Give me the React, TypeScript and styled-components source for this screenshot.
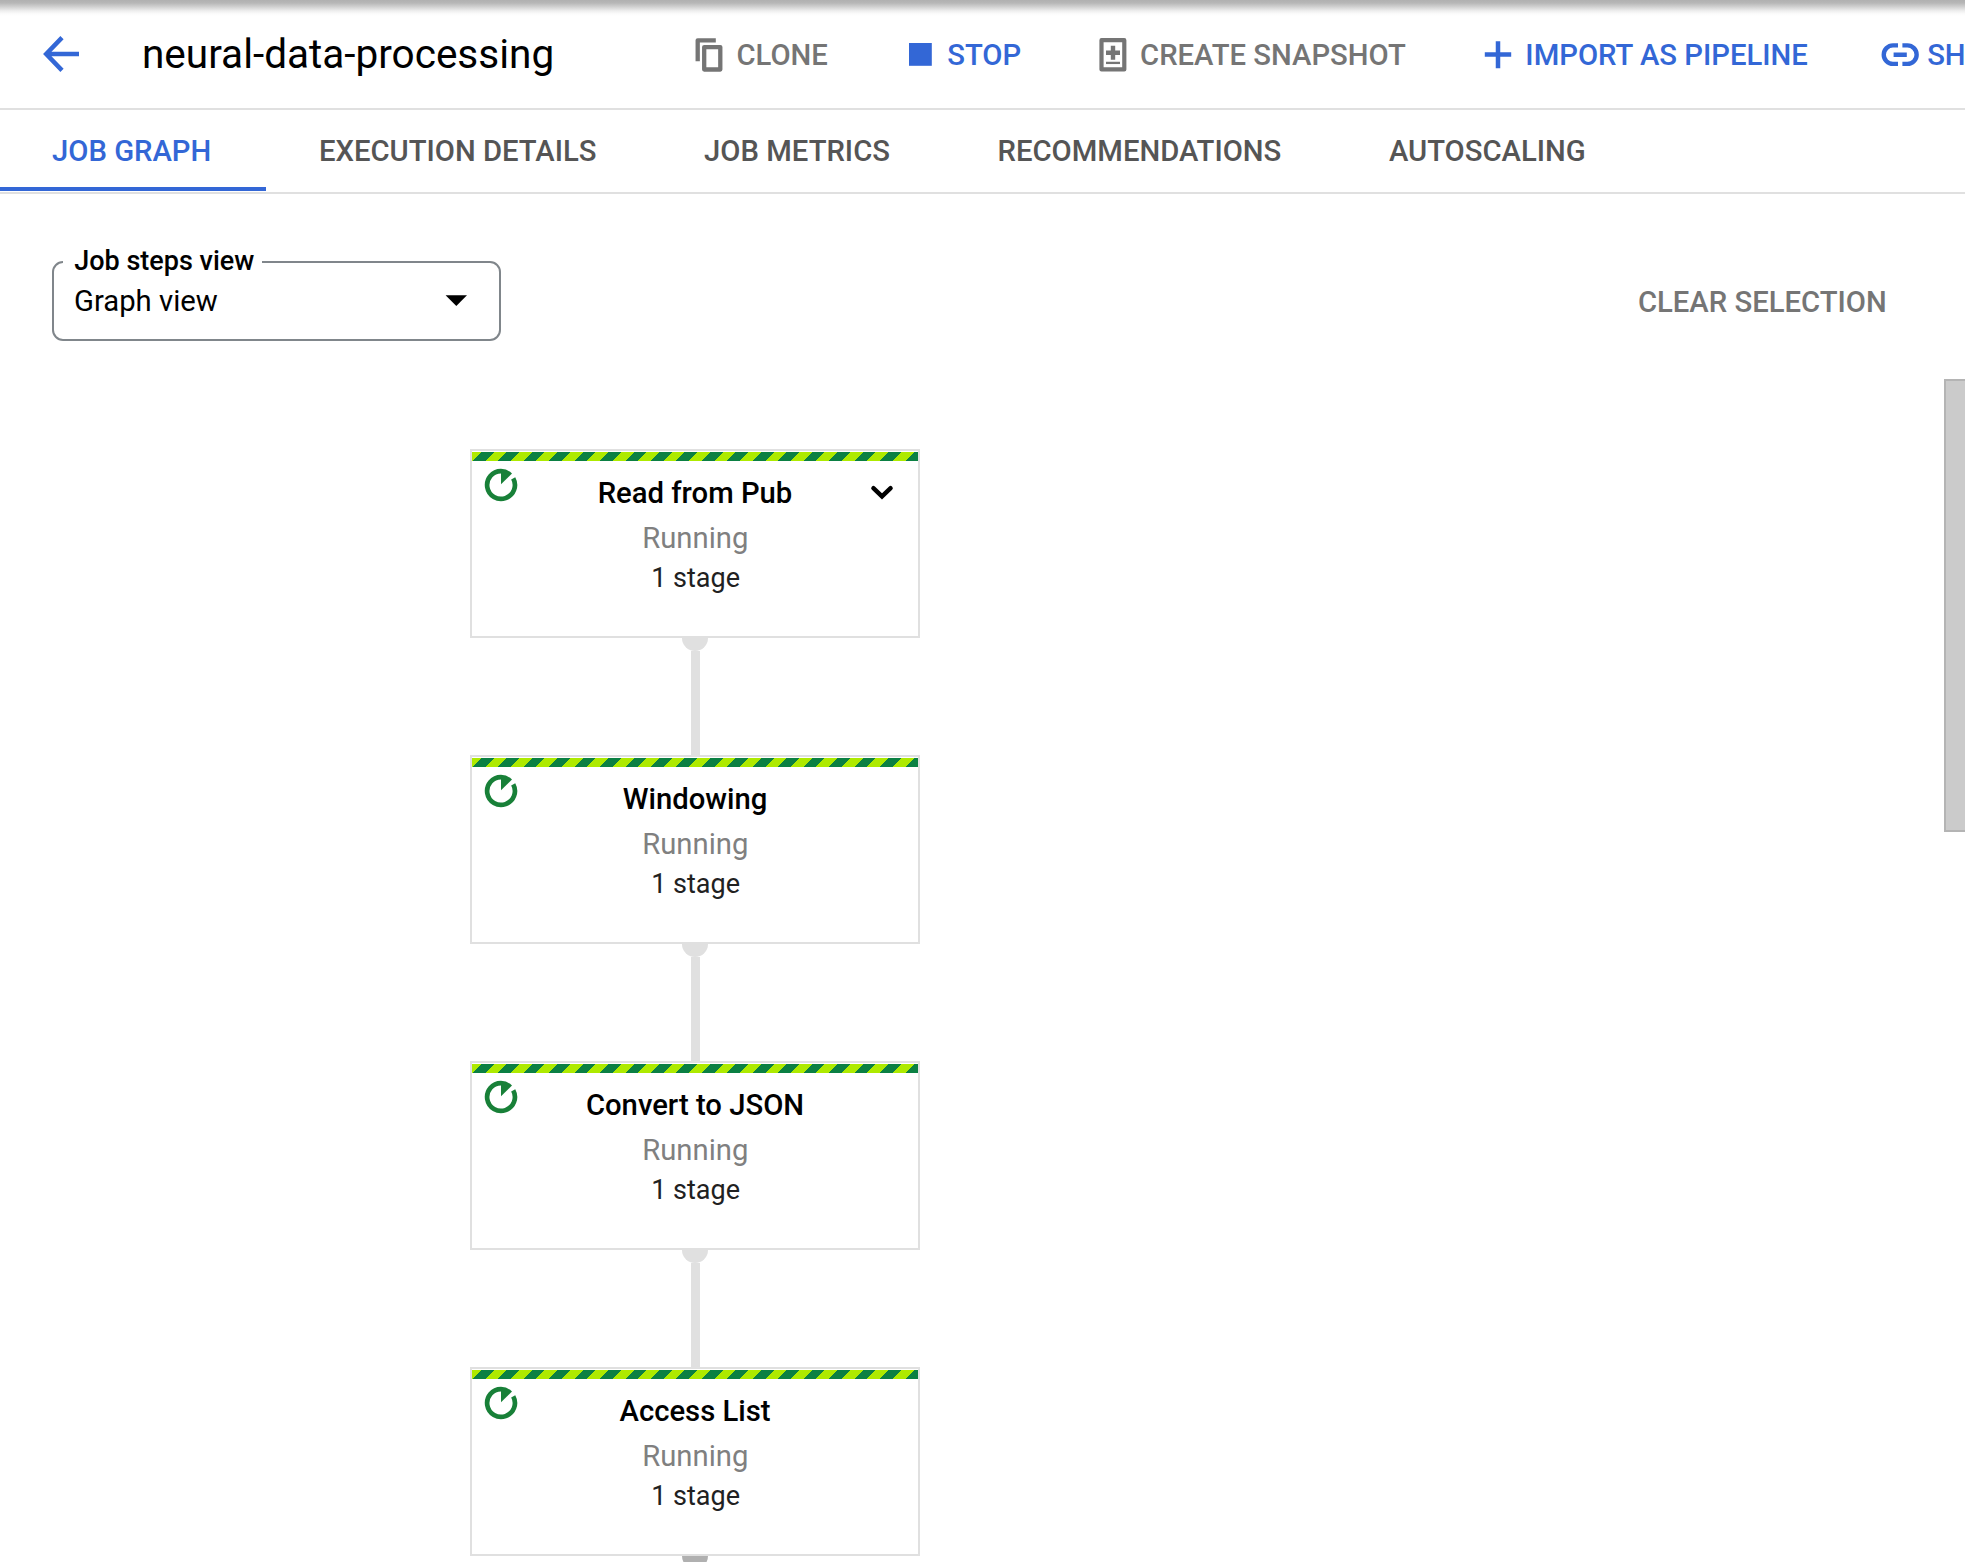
import React from "react";
import styled, { createGlobalStyle } from "styled-components";

const BLUE = "#3367d6";
const GREY = "#757575";
const LINE = "#e0e0e0";

const GlobalStyle = createGlobalStyle`
  * { box-sizing: border-box; }
  body {
    margin: 0;
    background: #fff;
    font-family: "Roboto", "Liberation Sans", sans-serif;
    color: #000;
  }
  svg { display: block; flex: none; overflow: visible; }
`;

const Page = styled.div`
  position: relative;
  display: flex;
  flex-direction: column;
  width: 1965px;
  height: 1562px;
  overflow: hidden;
  background: #fff;
`;

const TopShadow = styled.div`
  position: absolute;
  inset: 0 0 auto 0;
  height: 16px;
  background: linear-gradient(#b0b0b0 0, #b7b7b7 3px, #d2d2d2 7px, #efefef 11px, #fcfcfc 14px, #fff 16px);
`;

const Header = styled.header`
  display: flex;
  align-items: center;
  flex: none;
  height: 110px;
  padding: 2px 0 0 43px;
  border-bottom: 2px solid ${LINE};
  white-space: nowrap;
`;

const BackButton = styled.button`
  margin: 0 0 2px;
  padding: 0;
  border: 0;
  background: none;
`;

const Title = styled.h1`
  margin: 0 0 2px 63px;
  font-size: 40.5px;
  font-weight: 400;
  line-height: 54px;
`;

const ActionButton = styled.button<{ $lead: number; $active?: boolean }>`
  display: flex;
  align-items: center;
  flex: none;
  gap: 9px;
  margin: 0 0 0 ${(p) => p.$lead}px;
  padding: 0;
  border: 0;
  background: none;
  font: 500 29.25px/40px "Roboto", sans-serif;
  color: ${(p) => (p.$active ? BLUE : GREY)};
`;

const Tabs = styled.nav`
  display: flex;
  flex: none;
  height: 84px;
  border-bottom: 2px solid ${LINE};
`;

const Tab = styled.div<{ $selected?: boolean }>`
  display: flex;
  align-items: center;
  padding: 5px 54.5px 0 52px;
  margin-right: 1.1px;
  margin-bottom: 1px;
  border-bottom: 4px solid ${(p) => (p.$selected ? BLUE : "transparent")};
  font-size: 29.25px;
  font-weight: 500;
  line-height: 40px;
  white-space: nowrap;
  color: ${(p) => (p.$selected ? BLUE : "#555")};
`;

const Controls = styled.div`
  display: flex;
  align-items: center;
  justify-content: space-between;
  flex: none;
  height: 80px;
  margin: 67px 78.3px 0 52px;
`;

const Select = styled.div`
  position: relative;
  display: flex;
  align-items: center;
  justify-content: space-between;
  width: 449px;
  height: 80px;
  padding: 0 32px 0 20px;
  border: 2px solid #80868b;
  border-radius: 11px;
  font-size: 29.25px;
`;

const SelectLabel = styled.span`
  position: absolute;
  top: -17px;
  left: 9px;
  width: 199px;
  padding-left: 11.2px;
  background: #fff;
  font-size: 27px;
  font-weight: 500;
  line-height: 30px;
  white-space: nowrap;
`;

const ClearButton = styled.button`
  padding: 2px 0 0;
  border: 0;
  background: none;
  font: 500 29.25px/40px "Roboto", sans-serif;
  color: ${GREY};
`;

const GraphArea = styled.main`
  display: flex;
  justify-content: space-between;
  align-items: flex-start;
  flex: none;
  margin-top: 38px;
  height: 1183px;
  overflow: hidden;
`;

const Flow = styled.div`
  display: flex;
  flex-direction: column;
  align-items: center;
  width: 450px;
  margin: 70px 0 0 470px;
`;

const ScrollThumb = styled.div`
  width: 21px;
  height: 453px;
  border: 2px solid #b4b4b4;
  border-right: 0;
  background: #cbcbcb;
`;

const Card = styled.section`
  position: relative;
  flex: none;
  width: 450px;
  height: 189px;
  padding-top: 1px;
  border: 2px solid ${LINE};
  background: #fff;
  text-align: center;
`;

const Stripes = styled.div`
  height: 9px;
  margin-bottom: 9.5px;
  background: repeating-linear-gradient(135deg, #aeea00 0 6.6px, #0b8043 6.6px 15.6px, #aeea00 15.6px 18px);
`;

const StepName = styled.div`
  font-size: 29.25px;
  font-weight: 500;
  line-height: 45px;
`;

const StepState = styled.div`
  padding-left: 0.6px;
  font-size: 29.25px;
  line-height: 45px;
  color: #808080;
`;

const StepStages = styled.div`
  padding-left: 1.2px;
  font-size: 27px;
  line-height: 35px;
  color: #212121;
`;

const StatusBadge = styled.span`
  position: absolute;
  top: 17.2px;
  left: 12.4px;
`;

const ExpandBadge = styled.span`
  position: absolute;
  top: 34px;
  right: 24px;
`;

const Connector = styled.div<{ $dark?: boolean }>`
  display: flex;
  flex-direction: column;
  align-items: center;
  flex: none;
  height: 117px;
  color: ${(p) => (p.$dark ? "#b0b0b0" : LINE)};
`;

const Port = styled.div`
  width: 26px;
  height: 13px;
  border-radius: 0 0 13px 13px;
  background: currentColor;
`;

const Wire = styled.div`
  flex: 1;
  width: 9px;
  background: currentColor;
`;

const BackIcon = () => (
  <svg width="36" height="36" viewBox="0 0 36 36" fill="none" stroke={BLUE} strokeWidth="4.5">
    <path d="M36 18H3.5M19 1.6L3.2 18L19 34.4" />
  </svg>
);

const CloneIcon = () => (
  <svg width="36" height="36" viewBox="0 0 36 36" fill="none" stroke="currentColor" strokeWidth="4.3" strokeLinejoin="round">
    <path d="M24.8 3.3H6.7V24.3" />
    <rect x="13.2" y="10.1" width="16.1" height="22.4" />
  </svg>
);

const StopIcon = () => (
  <svg width="36" height="36" viewBox="0 0 36 36" fill="currentColor">
    <rect x="7" y="6" width="22.8" height="22.8" />
  </svg>
);

const SnapshotIcon = () => (
  <svg width="36" height="36" viewBox="0 0 36 36" fill="none" stroke="currentColor">
    <rect x="6.5" y="3.2" width="22.8" height="29.2" strokeWidth="4.2" strokeLinejoin="round" />
    <path d="M11 15.7H25M18 8.8V22.8" strokeWidth="4.4" />
    <path d="M11 25.9H25" strokeWidth="2.3" />
  </svg>
);

const PlusIcon = () => (
  <svg width="36" height="36" viewBox="0 0 36 36" fill="none" stroke="currentColor" strokeWidth="4.5">
    <path d="M4.8 17.6H31.2M18 4.2V31.2" />
  </svg>
);

const LinkIcon = () => (
  <svg width="36" height="36" viewBox="0 0 36 36" fill="none" stroke="currentColor" strokeWidth="4.4">
    <path d="M16 8.4H11A9.25 9.25 0 0 0 11 26.9H16M20.4 8.4H25.4A9.25 9.25 0 0 1 25.4 26.9H20.4M11.6 17.7H24.8" />
  </svg>
);

const DropArrow = () => (
  <svg width="22" height="11" viewBox="0 0 22 11">
    <path d="M0.6 -0.8H22L11.3 10.1Z" />
  </svg>
);

const RunningIcon = () => (
  <svg width="34" height="34" viewBox="0 0 34 34">
    <path d="M17 3.1A13.9 13.9 0 1 0 29.2 10.3" fill="none" stroke="#188038" strokeWidth="4.7" />
    <path d="M17 0.8A16.2 16.2 0 0 1 28 5.5L17 16.2Z" fill="#188038" />
  </svg>
);

const ChevronIcon = () => (
  <svg width="24" height="16" viewBox="0 0 24 16" fill="none" stroke="#000" strokeWidth="4.4" strokeLinecap="round">
    <path d="M3.4 3.2L12 11.4L20.6 3.2" />
  </svg>
);

const actions = [
  { label: "CLONE", Icon: CloneIcon, lead: 137.3, active: false },
  { label: "STOP", Icon: StopIcon, lead: 74.4, active: true },
  { label: "CREATE SNAPSHOT", Icon: SnapshotIcon, lead: 73.9, active: false },
  { label: "IMPORT AS PIPELINE", Icon: PlusIcon, lead: 74.5, active: true },
  { label: "SHARE", Icon: LinkIcon, lead: 74.4, active: true },
];

const tabs = ["JOB GRAPH", "EXECUTION DETAILS", "JOB METRICS", "RECOMMENDATIONS", "AUTOSCALING"];

const steps = ["Read from Pub", "Windowing", "Convert to JSON", "Access List"];

export default function App() {
  return (
    <Page>
      <GlobalStyle />
      <TopShadow />
      <Header>
        <BackButton aria-label="Back">
          <BackIcon />
        </BackButton>
        <Title>neural-data-processing</Title>
        {actions.map(({ label, Icon, lead, active }) => (
          <ActionButton key={label} $lead={lead} $active={active}>
            <Icon />
            {label}
          </ActionButton>
        ))}
      </Header>
      <Tabs>
        {tabs.map((t, i) => (
          <Tab key={t} $selected={i === 0}>{t}</Tab>
        ))}
      </Tabs>
      <Controls>
        <Select>
          <SelectLabel>Job steps view</SelectLabel>
          Graph view
          <DropArrow />
        </Select>
        <ClearButton>CLEAR SELECTION</ClearButton>
      </Controls>
      <GraphArea>
        <Flow>
          {steps.map((name, i) => (
            <React.Fragment key={name}>
              <Card>
                <Stripes />
                <StatusBadge><RunningIcon /></StatusBadge>
                {i === 0 && <ExpandBadge><ChevronIcon /></ExpandBadge>}
                <StepName>{name}</StepName>
                <StepState>Running</StepState>
                <StepStages>1 stage</StepStages>
              </Card>
              <Connector $dark={i === steps.length - 1}>
                <Port />
                <Wire />
              </Connector>
            </React.Fragment>
          ))}
        </Flow>
        <ScrollThumb />
      </GraphArea>
    </Page>
  );
}
